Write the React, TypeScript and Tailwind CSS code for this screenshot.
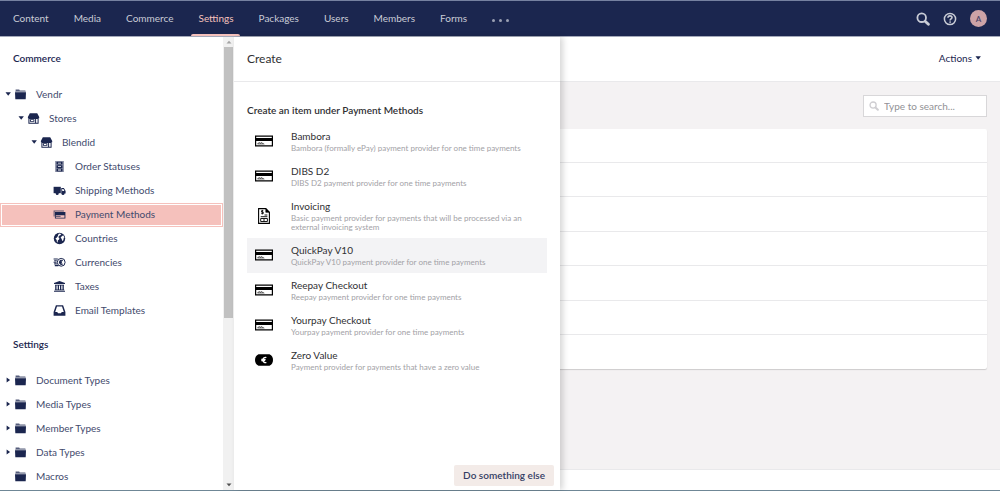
import type { ReactNode } from "react";

type IconProps = { className?: string };

const FolderIcon = ({ className = "" }: IconProps) => (
  <svg viewBox="0 0 13 13" className={className} fill="currentColor" aria-hidden="true">
    <path d="M1.6 1.6h3.6l.6.9h5.6v.8H1.6z" opacity=".75" />
    <path d="M1.2 3.3h10.6v1H1.200z" opacity=".5" />
    <path d="M1 4.300h11l-.3 7H1.300z" />
  </svg>
);

const StoreIcon = ({ className = "" }: IconProps) => (
  <svg viewBox="0 0 13 13" className={className} fill="currentColor" aria-hidden="true">
    <path d="M2.800 1.200h7.400l2 3.800v1.200H.9V5z" />
    <path d="M1.400 5.800h10.200v6H1.400zM2.400 7v3.800h8.200V7z" fillRule="evenodd" />
    <path d="M2.900 7.200h4.500v2.600H2.900zM3.900 8v1h2.500V8zM8.100 7h1v4h-1z" fillRule="evenodd" />
  </svg>
);

const CabinetIcon = ({ className = "" }: IconProps) => (
  <svg viewBox="0 0 13 13" className={className} fill="currentColor" aria-hidden="true">
    <path d="M2 1h9v11H2z" opacity=".45" />
    <path d="M3.500 1.800h6v2.800h-6zM3.500 5.200h6V8h-6zM3.500 8.600h6v2.800h-6z" />
    <path d="M5 2.800h3v.8H5zM5 6.200h3V7H5zM5 9.600h3v.8H5z" fill="#fff" />
  </svg>
);

const TruckIcon = ({ className = "" }: IconProps) => (
  <svg viewBox="0 0 13 13" className={className} fill="currentColor" aria-hidden="true">
    <path d="M.6 2.800h7.200v6.400H.6z" />
    <path d="M8.300 4.100h2.600L12.600 7v2.600H8.300zM9.200 5.100v1.800h2.200l-1-1.800z" fillRule="evenodd" />
    <circle cx="4.200" cy="9.500" r="1.500" />
    <circle cx="10" cy="9.500" r="1.500" />
  </svg>
);

const CardsIcon = ({ className = "" }: IconProps) => (
  <svg viewBox="0 0 13 13" className={className} fill="currentColor" aria-hidden="true">
    <path d="M.6 2.600h10.300v1H1.600v5h-1z" opacity=".7" />
    <path d="M1.900 4.100h10.500v6.500H1.900zM2.800 7.200v2.500h8.700V7.200z" fillRule="evenodd" />
    <path d="M2.800 7.900h4.800v1H2.800z" opacity=".7" />
  </svg>
);

const GlobeIcon = ({ className = "" }: IconProps) => (
  <svg viewBox="0 0 13 13" className={className} aria-hidden="true">
    <circle cx="6.500" cy="6.500" r="5.700" fill="currentColor" />
    <path d="M5.900 1.600 8.200 2 7.400 3.300l-1.300.4L5.300 5.200l1.100.7-.3 1.500-1.200.9L4.600 10.600l-.7-.5L3.700 8 2.400 6.400l1.500-.9 1-2zM8.500 4.400l1.700-1.200 1.300 2.200-.7.4-.5 2.400-1 .9-.7-2.300-1-1z" fill="#fff" />
    <path d="M2.200 3 4.900 1.600 4.700 4.200l-2 1z" fill="currentColor" />
  </svg>
);

const CoinsIcon = ({ className = "" }: IconProps) => (
  <svg viewBox="0 0 13 13" className={className} fill="none" stroke="currentColor" aria-hidden="true">
    <circle cx="8.200" cy="6.300" r="3.900" strokeWidth="1" />
    <path d="M9.700 4.700a2 2 0 1 0 0 3.200M6.200 5.800h2.800M6.200 6.900h2.600" strokeWidth="1.100" />
    <path d="M.6 3h4.200M1.200 4.700h2.600M.6 6.300h2.900M1.200 7.900h2.600M1.800 9.600h3.600" strokeWidth="1.100" />
  </svg>
);

const BankIcon = ({ className = "" }: IconProps) => (
  <svg viewBox="0 0 13 13" className={className} fill="currentColor" aria-hidden="true">
    <path d="M6.500.9 12 3v1.100H1V3zM2 4.700h9v.8H2zM2.200 5.500h1.300v4.200H2.200zM4.700 5.500H6v4.200H4.700zM7 5.500h1.300v4.200H7zM9.500 5.500h1.300v4.200H9.500zM1.800 9.600h9.400v.7H1.800zM1 10.700h11v1.100H1z" />
  </svg>
);

const InboxIcon = ({ className = "" }: IconProps) => (
  <svg viewBox="0 0 13 13" className={className} fill="currentColor" aria-hidden="true">
    <path d="M2.900 1.200h7.200L12.400 8v3.800H.6V8zM4 2.400 2.200 8h2l.9 1.300h2.800L8.800 8h2L9 2.400z" fillRule="evenodd" />
  </svg>
);

const CreditCardIcon = () => (
  <svg viewBox="0 0 18 12" className="h-3 w-[18px]" aria-hidden="true">
    <path d="M.6 1.100h16.800v9.800H.6z" fill="#fff" stroke="#000" strokeWidth="1.200" />
    <path d="M0 3h18v3H0z" fill="#000" />
    <path d="M2.500 8.500h1.200v-.7h1.200v.7h1v-.7h1.200v.7h1.600" stroke="#444" strokeWidth=".9" fill="none" />
    <path d="M2.500 9.200h7" stroke="#777" strokeWidth=".7" />
  </svg>
);

const InvoiceIcon = () => (
  <svg viewBox="0 0 12 16" className="h-4 w-3" fill="none" stroke="#000" aria-hidden="true">
    <path d="M.6.6h7.200l3.600 3.700v11.100H.6z" fill="#fff" strokeWidth="1.100" />
    <path d="M7.800.6v3.700h3.600z" fill="#000" strokeWidth=".6" />
    <path d="M5.300 2.700H3.500v1.400h1.800v1.500H3.200M4.400 1.900v4.500" strokeWidth=".8" />
    <path d="M6.500 7h2.900M2.700 8.700h6.700M2.700 10.500h6.700v3H2.700zM6 10.500v3" strokeWidth=".9" />
  </svg>
);

const EuroIcon = () => (
  <svg viewBox="0 0 18 12" className="h-3 w-[18px]" aria-hidden="true">
    <path d="M3.500.3h11Q18 2 18 6t-3.500 5.700h-11Q0 10 0 6T3.500.3z" fill="#000" />
    <path d="M11.400 3.500a2.600 2.700 0 1 0 0 5M6.300 5.300h4.300M6.300 6.700h3.900" fill="none" stroke="#fff" strokeWidth="1.300" />
  </svg>
);

const SearchIcon = ({ className = "" }: IconProps) => (
  <svg viewBox="0 0 14 14" className={className} fill="none" stroke="currentColor" aria-hidden="true">
    <circle cx="5.700" cy="5.700" r="4.300" strokeWidth="1.800" />
    <path d="m9.400 9.400 3 2.900" strokeWidth="2.800" strokeLinecap="round" />
  </svg>
);

const HelpIcon = () => (
  <svg viewBox="0 0 14 14" className="size-3.5" fill="none" stroke="currentColor" aria-hidden="true">
    <circle cx="7" cy="7" r="5.600" strokeWidth="1.500" />
    <path d="M5 5.700c0-2.500 4-2.400 4-.2 0 1.400-1.900 1.400-1.900 2.900" strokeWidth="1.600" />
    <circle cx="7.100" cy="10.100" r=".5" fill="currentColor" strokeWidth=".8" />
  </svg>
);

const Caret = ({ open }: { open: boolean }) => (
  <svg viewBox="0 0 8 8" className="size-2" fill="currentColor" aria-hidden="true">
    {open ? <path d="M1.500 2.300h5.400L4.200 5.800z" /> : <path d="M2.600 1.500v5L6.100 4z" />}
  </svg>
);

const sections = ["Content", "Media", "Commerce", "Settings", "Packages", "Users", "Members", "Forms"];

type Node = {
  label: string;
  Icon: (p: IconProps) => ReactNode;
  level: 0 | 1 | 2 | 3;
  caret?: "open" | "closed";
  selected?: boolean;
};

const indents = ["pl-1", "pl-[17px]", "pl-[30px]", "pl-[43px]"];

const commerceTree: Node[] = [
  { label: "Vendr", Icon: FolderIcon, level: 0, caret: "open" },
  { label: "Stores", Icon: StoreIcon, level: 1, caret: "open" },
  { label: "Blendid", Icon: StoreIcon, level: 2, caret: "open" },
  { label: "Order Statuses", Icon: CabinetIcon, level: 3 },
  { label: "Shipping Methods", Icon: TruckIcon, level: 3 },
  { label: "Payment Methods", Icon: CardsIcon, level: 3, selected: true },
  { label: "Countries", Icon: GlobeIcon, level: 3 },
  { label: "Currencies", Icon: CoinsIcon, level: 3 },
  { label: "Taxes", Icon: BankIcon, level: 3 },
  { label: "Email Templates", Icon: InboxIcon, level: 3 },
];

const settingsTree: Node[] = [
  { label: "Document Types", Icon: FolderIcon, level: 0, caret: "closed" },
  { label: "Media Types", Icon: FolderIcon, level: 0, caret: "closed" },
  { label: "Member Types", Icon: FolderIcon, level: 0, caret: "closed" },
  { label: "Data Types", Icon: FolderIcon, level: 0, caret: "closed" },
  { label: "Macros", Icon: FolderIcon, level: 0 },
];

const providers = [
  { name: "Bambora", text: "Bambora (formally ePay) payment provider for one time payments", icon: <CreditCardIcon /> },
  { name: "DIBS D2", text: "DIBS D2 payment provider for one time payments", icon: <CreditCardIcon /> },
  { name: "Invoicing", text: "Basic payment provider for payments that will be processed via an external invoicing system", icon: <InvoiceIcon /> },
  { name: "QuickPay V10", text: "QuickPay V10 payment provider for one time payments", icon: <CreditCardIcon />, active: true },
  { name: "Reepay Checkout", text: "Reepay payment provider for one time payments", icon: <CreditCardIcon /> },
  { name: "Yourpay Checkout", text: "Yourpay payment provider for one time payments", icon: <CreditCardIcon /> },
  { name: "Zero Value", text: "Payment provider for payments that have a zero value", icon: <EuroIcon /> },
];

function Tree({ title, nodes }: { title: string; nodes: Node[] }) {
  return (
    <section>
      <h2 className="mb-0.5 flex h-11 items-center pb-0.5 pl-[13px] font-semibold">{title}</h2>
      <ul>
        {nodes.map(({ label, Icon, level, caret, selected }) => (
          <li
            key={label}
            className={`flex h-6 items-center pb-0.5 ${indents[level]} ${
              selected ? "bg-[#f5c1bc] shadow-[inset_0_0_0_1px_#f5c1bc,inset_0_0_0_2px_#fff]" : ""
            }`}
          >
            {caret ? (
              <button type="button" aria-label={`Toggle ${label}`} className="mr-0.5 size-2">
                <Caret open={caret === "open"} />
              </button>
            ) : (
              <span className="mr-0.5 size-2" />
            )}
            <a href="#" className="flex items-center gap-[9px]">
              <Icon className="size-[13px]" />
              <span className="text-[#424a6d]">{label}</span>
            </a>
          </li>
        ))}
      </ul>
    </section>
  );
}

function Header() {
  return (
    <header className="flex h-[37px] shrink-0 items-stretch justify-between border-t border-b border-t-[#7681a0] border-b-[#a4a9ba] bg-[#1b264f] text-[#c9ccd6]">
      <nav className="flex">
        {sections.map((name) => (
          <a
            key={name}
            href="#"
            className={`relative flex items-center pr-3 pb-px pl-[13px] ${name === "Settings" ? "text-[#f5c1bc]" : ""}`}
          >
            {name}
            {name === "Settings" && (
              <span className="absolute inset-x-[6px] bottom-0 h-0.5 rounded-t-sm bg-[#f5c1bc]" />
            )}
          </a>
        ))}
        <button type="button" aria-label="More sections" className="flex items-center gap-1 px-[13px] pt-[3px]">
          <span className="size-[3px] rounded-full bg-[#9ba0b3]" />
          <span className="size-[3px] rounded-full bg-[#9ba0b3]" />
          <span className="size-[3px] rounded-full bg-[#9ba0b3]" />
        </button>
      </nav>
      <div className="flex items-center gap-[13px] pr-[13px]">
        <button type="button" aria-label="Search">
          <SearchIcon className="size-3.5" />
        </button>
        <button type="button" aria-label="Help">
          <HelpIcon />
        </button>
        <button
          type="button"
          aria-label="Account"
          className="flex size-[17px] items-center justify-center rounded-full bg-[#cda3a7] text-[8px] font-semibold text-[#4b4468]"
        >
          A
        </button>
      </div>
    </header>
  );
}

function Sidebar() {
  return (
    <aside className="flex w-[234px] shrink-0 text-[#1b264f]">
      <div className="min-w-0 flex-1 overflow-hidden">
        <Tree title="Commerce" nodes={commerceTree} />
        <Tree title="Settings" nodes={settingsTree} />
      </div>
      <div className="flex w-[11px] flex-col items-center bg-[#f1f1f1]" aria-hidden="true">
        <svg viewBox="0 0 10 10" className="size-2.5 shrink-0">
          <path d="M2.500 6.500h5L5 3.800z" fill="#a3a3a3" />
        </svg>
        <div className="w-[9px] flex-[271] bg-[#c1c1c1]" />
        <div className="flex-[162]" />
        <svg viewBox="0 0 10 10" className="size-2.5 shrink-0">
          <path d="M2.500 3.500h5L5 6.200z" fill="#505050" />
        </svg>
      </div>
    </aside>
  );
}

function CreatePanel() {
  return (
    <div className="absolute inset-y-0 left-0 flex w-[326px] flex-col bg-white text-[#303033] shadow-[3px_0_6px_rgba(0,0,0,0.16)]">
      <h1 className="flex h-[45px] shrink-0 items-center border-b border-[#e9e9eb] px-[13px] text-[12px]">
        Create
      </h1>
      <div className="flex-1 px-[13px] pt-[21px]">
        <h2 className="mb-[7px] leading-[14px] font-semibold">Create an item under Payment Methods</h2>
        <ul>
          {providers.map((p) => (
            <li key={p.name}>
              <button
                type="button"
                className={`flex w-full items-center gap-2.5 pt-[5px] pr-5 pb-1.5 text-left ${
                  p.active ? "bg-[#f3f3f5]" : ""
                }`}
              >
                <span className="flex w-[34px] shrink-0 justify-center">{p.icon}</span>
                <span className="flex flex-col gap-px">
                  <span className="leading-[14px]">{p.name}</span>
                  <span className="text-[8px] leading-[9px] text-[#a2a1a6]">{p.text}</span>
                </span>
              </button>
            </li>
          ))}
        </ul>
      </div>
      <footer className="flex justify-end px-1.5 pb-1">
        <button type="button" className="h-[21px] rounded-xs bg-[#f3ebe8] px-[9px] font-semibold text-[#343d64]">
          Do something else
        </button>
      </footer>
    </div>
  );
}

function Content() {
  return (
    <main className="flex flex-1 flex-col bg-[#f4f2f3]">
      <div className="flex h-[45px] shrink-0 items-center justify-end border-b border-[#e9e9eb] bg-white px-[18px] pb-0.5 text-[#1b264f]">
        <button type="button" className="flex items-center gap-0.5">
          Actions
          <Caret open />
        </button>
      </div>
      <div className="flex flex-1 flex-col px-[13px] pt-[13px]">
        <label className="mb-3 flex h-[22px] w-[124px] items-center gap-[5px] self-end border border-[#d8d7d9] bg-white pl-[5px]">
          <SearchIcon className="size-2.5 shrink-0 text-[#cfced2]" />
          <input
            type="text"
            aria-label="Type to search"
            placeholder="Type to search..."
            className="w-full min-w-0 bg-transparent outline-none placeholder:text-[#929196]"
          />
        </label>
        <div className="divide-y divide-[#e9e9eb] rounded-xs bg-white shadow-[0_1px_1px_rgba(0,0,0,0.16)]">
          <div className="h-[34px]" />
          <div className="h-[34px]" />
          <div className="h-[35px]" />
          <div className="h-[34px]" />
          <div className="h-[35px]" />
          <div className="h-[34px]" />
          <div className="h-[34px]" />
        </div>
      </div>
      <div className="h-[21px] shrink-0 border-t border-[#e9e9eb] bg-white" />
    </main>
  );
}

export default function App() {
  return (
    <div className="flex h-screen flex-col border-b border-[#6f8796] bg-white font-['Lato',sans-serif] text-[10px]">
      <Header />
      <div className="flex min-h-0 flex-1">
        <Sidebar />
        <div className="relative flex min-w-0 flex-1">
          <Content />
          <CreatePanel />
        </div>
      </div>
    </div>
  );
}
